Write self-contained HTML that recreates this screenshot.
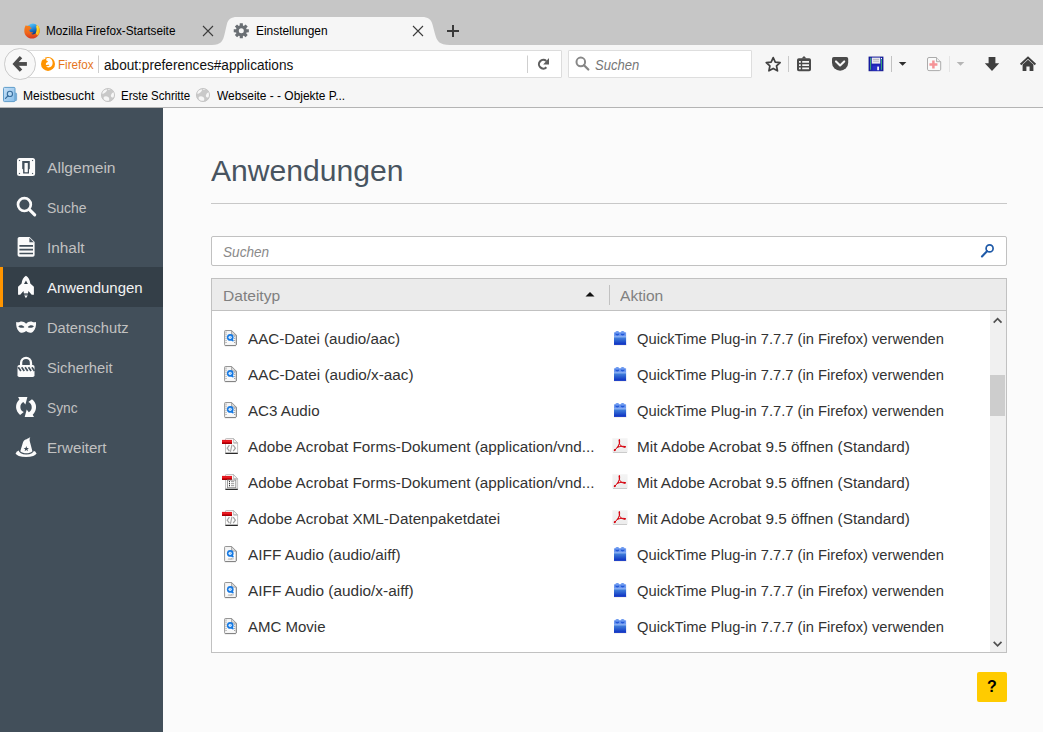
<!DOCTYPE html>
<html lang="de"><head><meta charset="utf-8"><title>Einstellungen</title>
<style>
html,body{margin:0;padding:0}
body{position:relative;width:1043px;height:732px;overflow:hidden;background:#fbfbfb;font-family:"Liberation Sans",sans-serif}
.t{position:absolute;white-space:pre;line-height:1;transform-origin:0 0;font-family:"Liberation Sans",sans-serif}
.abs{position:absolute}
#tabstrip{left:0;top:0;width:1043px;height:45px;background:#c6c6c6}
#navbar{left:0;top:45px;width:1043px;height:62px;background:#f6f6f6}
#chromeline{left:0;top:107px;width:1043px;height:1px;background:#b4b4b4}
#urlbar{left:19px;top:50px;width:541px;height:26px;background:#fff;border:1px solid #dcdcdc;border-radius:1px}
#searchbar{left:568px;top:50px;width:182px;height:26px;background:#fff;border:1px solid #dedede;border-radius:1px}
#back{left:4px;top:48px;width:29.6px;height:29.6px;border-radius:50%;background:#f8f8f8;border:1px solid #cbcbcb}
#sidebar{left:0;top:108px;width:163px;height:624px;background:#424f5a}
#sel{left:0;top:267px;width:163px;height:40px;background:#343f48}
#selbar{left:0;top:267px;width:3px;height:40px;background:#ff9500}
#hline{left:211px;top:203px;width:796px;height:1px;background:#c8c8c8}
#filter{left:211px;top:236px;width:794px;height:28px;background:#fff;border:1px solid #c1c1c1;border-radius:2px}
#tree{left:211px;top:278px;width:794px;height:373px;background:#fff;border:1px solid #c1c1c1}
#treehead{left:212px;top:279px;width:794px;height:31px;background:#ebebeb;border-bottom:1px solid #c1c1c1}
#colsep{left:609px;top:285px;width:1px;height:20px;background:#c1c1c1}
#sbar{left:990px;top:311px;width:16px;height:341px;background:#f0f0f0}
#thumb{left:990px;top:375px;width:15px;height:41px;background:#cdcdcd}
#help{left:977px;top:672px;width:30px;height:30px;background:#ffcb00;border-radius:2px}
svg{position:absolute;overflow:visible}

</style></head>
<body>
<div id="tabstrip" class="abs"></div>
<div id="navbar" class="abs"></div>
<div id="chromeline" class="abs"></div>
<!-- active tab shape -->
<svg style="left:0;top:0" width="1043" height="108" viewBox="0 0 1043 108">
  <path d="M212,45 C221,45 223,41 224.6,34 L226.8,24.5 C228.2,19 231,17 237,17 L422,17 C428,17 431,19 432.5,24.5 L435,34 C437,41 439,45 450,45 Z" fill="#f6f6f6"/>
  <!-- close X tab1 -->
  <path d="M203,26 L213,36 M213,26 L203,36" stroke="#3c3c3c" stroke-width="1.1" fill="none"/>
  <path d="M413,26 L423,36 M423,26 L413,36" stroke="#3c3c3c" stroke-width="1.1" fill="none"/>
  <!-- new tab plus -->
  <path d="M447,31 H459 M453,25 V37" stroke="#3a3a3a" stroke-width="2" fill="none"/>
</svg>
<div id="urlbar" class="abs"></div>
<div id="searchbar" class="abs"></div>
<div id="back" class="abs"></div>
<div id="sidebar" class="abs"></div>
<div id="sel" class="abs"></div>
<div id="selbar" class="abs"></div>
<div id="hline" class="abs"></div>
<div id="filter" class="abs"></div>
<div id="tree" class="abs"></div>
<div id="treehead" class="abs"></div>
<div id="colsep" class="abs"></div>
<div id="sbar" class="abs"></div>
<div id="thumb" class="abs"></div>
<div id="help" class="abs"></div>
<svg style="left:0;top:0" width="1043" height="732" viewBox="0 0 1043 732">
<defs>
<linearGradient id="lg" x1="0" y1="0" x2="0" y2="1"><stop offset="0" stop-color="#5a8cf0"/><stop offset="0.45" stop-color="#2f62d8"/><stop offset="1" stop-color="#1b3fae"/></linearGradient>
<linearGradient id="ffg" x1="0" y1="0" x2="0" y2="1"><stop offset="0" stop-color="#ffb400"/><stop offset="0.55" stop-color="#f06a0c"/><stop offset="1" stop-color="#c8321a"/></linearGradient>
<linearGradient id="pdfg" x1="0" y1="0" x2="0" y2="1"><stop offset="0" stop-color="#f4f4f4"/><stop offset="1" stop-color="#ececec"/></linearGradient>
<g id="qtbase">
  <linearGradient id="qtd" x1="0" y1="0" x2="0" y2="1"><stop offset="0" stop-color="#f1f1f1"/><stop offset="0.6" stop-color="#ffffff"/><stop offset="1" stop-color="#f4f4f4"/></linearGradient>
  <path d="M1.4,0.5 H7.6 L12.2,5.1 V14.7 Q12.2,15.5 11.4,15.5 H1.4 Q0.6,15.5 0.6,14.7 V1.3 Q0.6,0.5 1.4,0.5 Z" fill="url(#qtd)" stroke="#8a8a8a" stroke-width="0.9"/>
  <path d="M0.9,15.7 H12 M12.5,5.4 V15" stroke="#6a6a6a" stroke-width="0.7" opacity="0.7"/>
  <path d="M7.6,0.5 V5.1 H12.2 Z" fill="#dcdcdc" stroke="#8a8a8a" stroke-width="0.7"/>
  <circle cx="6.25" cy="7.4" r="3.35" fill="#1679e2"/>
  <path d="M7.6,9.4 L8.9,10.6" stroke="#1679e2" stroke-width="1.6" stroke-linecap="round"/>
  <circle cx="6.15" cy="7.3" r="1.6" fill="#e2f1ff"/>
  <path d="M6.2,6.4 V7.4 H7" stroke="#3b92ea" stroke-width="0.5" fill="none"/>
</g>
<g id="qt"><use href="#qtbase"/><rect x="1.5" y="1.70" width="1.1" height="0.8" fill="#7c7c7c"/><rect x="1.5" y="3.75" width="1.1" height="0.8" fill="#7c7c7c"/><rect x="1.5" y="5.80" width="1.1" height="0.8" fill="#7c7c7c"/><rect x="1.5" y="7.85" width="1.1" height="0.8" fill="#7c7c7c"/><rect x="1.5" y="9.90" width="1.1" height="0.8" fill="#7c7c7c"/><rect x="1.5" y="11.95" width="1.1" height="0.8" fill="#7c7c7c"/><rect x="10.1" y="5.80" width="1.1" height="0.8" fill="#7c7c7c"/><rect x="10.1" y="7.85" width="1.1" height="0.8" fill="#7c7c7c"/><rect x="10.1" y="9.90" width="1.1" height="0.8" fill="#7c7c7c"/><rect x="10.1" y="11.95" width="1.1" height="0.8" fill="#7c7c7c"/></g>
<g id="qta"><use href="#qtbase"/><path d="M4.2,13.8 L5,12.4 L5.8,13.8 M6.4,12.4 V13.8 M7.2,13.8 V12.4 H8.2 M7.2,13.1 H8 M8.8,13.8 V12.4 H9.6" stroke="#9a9a9a" stroke-width="0.6" fill="none"/></g>
<g id="lego">
  <linearGradient id="lgb" x1="0" y1="0" x2="0" y2="1"><stop offset="0" stop-color="#4584de"/><stop offset="0.45" stop-color="#2a5ecf"/><stop offset="1" stop-color="#0a2cc2"/></linearGradient>
  <rect x="0.1" y="13.6" width="12.6" height="0.9" fill="#8a7a6a" opacity="0.25"/>
  <rect x="0.2" y="1.3" width="12.1" height="5.4" rx="0.6" fill="#6c98ef"/>
  <rect x="1.5" y="0" width="4" height="4.8" rx="1.6" fill="#6d9af0"/>
  <rect x="6.8" y="0" width="4" height="4.8" rx="1.6" fill="#6d9af0"/>
  <path d="M1.6,2.4 Q3.5,3.4 5.4,2.4 V3.6 Q3.5,5.4 1.6,3.6 Z" fill="#2358d8"/>
  <path d="M6.9,2.4 Q8.8,3.4 10.7,2.4 V3.6 Q8.8,5.4 6.9,3.6 Z" fill="#2358d8"/>
  <rect x="0.2" y="5.6" width="12.1" height="0.9" fill="#9dbcf7"/>
  <rect x="0.2" y="6.4" width="12.1" height="7.6" fill="url(#lgb)"/>
</g>
<g id="pdfa">
  <rect x="0.6" y="13.4" width="14" height="1.5" rx="0.6" fill="#9c9c9c" opacity="0.75"/>
  <rect x="0" y="0" width="15.2" height="14.2" fill="url(#pdfg)"/>
  <g fill="none" stroke="#d6000c" stroke-linecap="round">
  <path d="M6.9,1.7 C6.5,3.4 6.9,5.2 7.7,6.6 C8.8,8.3 10.6,9 12.4,8.7" stroke-width="1"/>
  <path d="M7.3,3.8 C6.9,6.4 5.2,9.4 2.6,11.8" stroke-width="1"/>
  <path d="M4.8,9.3 C7.2,8.1 10,7.8 12.6,8.3" stroke-width="0.9"/>
  </g>
  <path d="M6.3,1.6 C6.5,0.8 7.6,0.8 7.7,1.7 C7.8,2.5 7.5,3.3 7.2,3.9 C6.7,3.2 6.2,2.4 6.3,1.6 Z" fill="#d6000c"/>
  <ellipse cx="2.5" cy="11.8" rx="1.25" ry="0.95" transform="rotate(-40 2.5 11.8)" fill="#d6000c"/>
  <ellipse cx="12.3" cy="8.6" rx="1.3" ry="0.85" fill="#d6000c"/>
  <path d="M5.2,8.4 L6.8,7.4 L6.6,9 Z" fill="#d6000c"/>
</g>
<g id="pdfdoc">
  <linearGradient id="redg" x1="0" y1="0" x2="0" y2="1"><stop offset="0" stop-color="#d80d16"/><stop offset="0.3" stop-color="#f0262c"/><stop offset="0.65" stop-color="#cc0008"/><stop offset="1" stop-color="#8e0006"/></linearGradient>
  <path d="M4.2,0.5 H11.4 L15.6,4.7 V15 H3.5 V1.2 Q3.5,0.5 4.2,0.5 Z" fill="#fdfdfd" stroke="#bcbcbc" stroke-width="0.9"/>
  <path d="M11.4,0.5 V4.7 H15.6 Z" fill="#f4f4f4" stroke="#b4b4b4" stroke-width="0.8"/>
  <path d="M11.6,5.2 H15.4" stroke="#9a9a9a" stroke-width="0.8" opacity="0.7"/>
  <path d="M3.4,15.4 H15.8" stroke="#2a2a2a" stroke-width="1.2"/>
  <rect x="0" y="1.9" width="10" height="4.1" fill="url(#redg)"/>
</g>
<g id="xmlg"><path d="M7.4,7.2 L5.2,10.2 L7.4,13.2 M11.2,7.2 L13.4,10.2 L11.2,13.2" fill="none" stroke="#a2a2a2" stroke-width="1.2"/><path d="M10,6.6 L8.4,13.8" fill="none" stroke="#a8a8a8" stroke-width="1.2"/></g>
<g id="formg"><rect x="5.4" y="6.1" width="8.4" height="7.6" fill="#fff" stroke="#8c8c8c" stroke-width="0.9"/>
<circle cx="7.5" cy="7.7" r="0.6" fill="#111"/><circle cx="7.5" cy="9.7" r="0.6" fill="#111"/><circle cx="7.5" cy="11.7" r="0.6" fill="#111"/>
<path d="M9,7.7 H12.2 M9,9.7 H12.2 M9,11.7 H12.2" stroke="#8a8a8a" stroke-width="0.9"/></g>
<g id="globe">
  <circle cx="7" cy="7" r="6.6" fill="#c9c9c9" stroke="#c0c0c0" stroke-width="0.8"/>
  <path d="M1.9,3.6 C2.8,2.2 4.6,1.4 6,1.6 C6.4,2.4 5.6,3.4 4.6,4.2 C3.8,5 2.6,5.8 1.3,5.8 C1.3,5 1.5,4.2 1.9,3.6 Z" fill="#f6f6f6"/>
  <path d="M3,8.8 C4.2,7.8 6,8 7.2,9 C8.4,10 8.6,11.6 7.8,12.7 C6,13.2 4,12.6 2.9,11.2 C2.5,10.4 2.5,9.4 3,8.8 Z" fill="#f6f6f6"/>
  <path d="M10,7 C10.4,5.8 11.4,4.6 12.5,4.2 C13.1,5.6 13.2,7.8 12.5,9.3 C11.5,9.6 10.4,9.2 10,8.4 C9.8,8 9.8,7.4 10,7 Z" fill="#f6f6f6"/>
  <path d="M6.8,1.1 C7.8,1 8.8,1.2 9.6,1.7 C8.8,2.2 7.6,2.2 6.8,1.8 Z" fill="#e9e9e9"/>
</g>
</defs>
<g transform="translate(24,23)">
<defs>
<linearGradient id="glb" x1="0.3" y1="0" x2="0.7" y2="1"><stop offset="0" stop-color="#5ccbff"/><stop offset="0.45" stop-color="#1f86d8"/><stop offset="1" stop-color="#06206e"/></linearGradient>
<linearGradient id="fox" x1="0" y1="0" x2="0" y2="1"><stop offset="0" stop-color="#f7831c"/><stop offset="0.6" stop-color="#ee651a"/><stop offset="1" stop-color="#d8351e"/></linearGradient>
<linearGradient id="tail" x1="0" y1="0" x2="1" y2="1"><stop offset="0" stop-color="#fff36a"/><stop offset="0.5" stop-color="#ffd21e"/><stop offset="1" stop-color="#f58a1a"/></linearGradient>
</defs>
<circle cx="8.8" cy="6.4" r="6" fill="url(#glb)"/>
<path d="M1.8,2.2 C2.6,2.8 3.4,2.9 4.2,2.7 C4.9,3 5.7,3 6.3,2.8 C5.9,3.6 6,4.2 6.6,4.6 C7.2,4.4 7.8,4.7 7.4,5.4 C6.6,5.8 5.8,6.2 5.4,7 C5.3,8 5.8,8.8 6.8,9.2 C7.8,9.4 8.8,9.1 9.4,9.6 C8.8,10.4 8,10.8 7,10.8 C8.4,11.9 10.6,11.6 11.8,10 C12.9,8.4 13,6 12.4,4.2 C12.2,3.2 12.6,2.2 13.4,1.9 C14.6,3 15.6,5 15.7,7.2 C15.8,11.8 12.4,15.6 8,15.6 C3.6,15.6 0.3,12.2 0.3,8 C0.3,5.6 0.8,3.6 1.8,2.2 Z" fill="url(#fox)"/>
<path d="M13.4,1.9 C14.6,3 15.6,5 15.7,7.2 C15.8,9 15.2,10.8 14.2,12.2 C13.4,12.4 12.4,12 11.8,10 C12.9,8.4 13,6 12.4,4.2 C12.2,3.2 12.6,2.2 13.4,1.9 Z" fill="url(#tail)"/>
</g>
<path d="M246.55,29.17 L248.85,29.27 L248.85,32.33 L246.55,32.43 L246.16,33.37 L247.72,35.05 L245.55,37.22 L243.87,35.66 L242.93,36.05 L242.83,38.35 L239.77,38.35 L239.67,36.05 L238.73,35.66 L237.05,37.22 L234.88,35.05 L236.44,33.37 L236.05,32.43 L233.75,32.33 L233.75,29.27 L236.05,29.17 L236.44,28.23 L234.88,26.55 L237.05,24.38 L238.73,25.94 L239.67,25.55 L239.77,23.25 L242.83,23.25 L242.93,25.55 L243.87,25.94 L245.55,24.38 L247.72,26.55 L246.16,28.23 Z M243.80,30.80 A2.5,2.5 0 1 0 238.80,30.80 A2.5,2.5 0 1 0 243.80,30.80 Z" fill="#6a6f74" fill-rule="evenodd"/>
<path d="M21,57.2 L14.8,63.9 L21,70.6" fill="none" stroke="#4c4c4c" stroke-width="3.4" stroke-linecap="butt" stroke-linejoin="miter"/><path d="M15.5,63.95 H26.9" stroke="#4c4c4c" stroke-width="3.8"/>
<g transform="translate(41,56.9)">
<circle cx="7" cy="7" r="7" fill="#ff9400"/>
<path d="M5.6,1.4 C6.6,1 8,0.9 9,1.3 C10.6,2 11.5,3.6 11.6,5.6 C11.7,7.6 11,9.4 9.4,10.2 C8.2,10.8 6.8,10.7 5.8,10.2 C5.5,9.9 5.4,9.6 5.5,9.3 C6.6,9.4 7.8,9.1 8.5,8.4 C7.8,7.9 7,7.8 6.2,8.1 C5.4,8.3 4.8,7.8 4.8,7 C5,6 5.8,5.4 6.7,5 C7,4.6 6.9,4.3 6.5,4.2 C5.8,4.2 5.4,3.9 5.3,3.4 C5.1,2.6 5.2,1.9 5.6,1.4 Z" fill="#fff"/>
<path d="M0.9,3 C1.2,2.4 1.5,2 1.9,1.7 C1.9,2.3 2.2,2.7 2.8,2.9 C3.4,2.2 4,1.9 4.6,1.6 L4.2,0.7 C2.9,1.1 1.7,1.9 0.9,3 Z" fill="#fff"/>
</g>
<path d="M98.5,55.5 V73" stroke="#cfcfcf" stroke-width="1"/>
<path d="M527.5,55.5 V73" stroke="#cfcfcf" stroke-width="1"/>
<path d="M546.3,61.1 A4.35,4.35 0 1 0 546.4,67.3" fill="none" stroke="#5e5e5e" stroke-width="2.1"/>
<path d="M549,58.1 V64.4 H543.2 Z" fill="#5e5e5e"/>
<circle cx="580.8" cy="61.9" r="4.3" fill="none" stroke="#888888" stroke-width="2"/><path d="M584,65.2 L588.3,69.5" stroke="#858585" stroke-width="2.3" stroke-linecap="round"/>
<path d="M773.20,57.60 L775.26,62.07 L780.14,62.64 L776.53,65.98 L777.49,70.81 L773.20,68.40 L768.91,70.81 L769.87,65.98 L766.26,62.64 L771.14,62.07 Z" fill="none" stroke="#404040" stroke-width="1.7" stroke-linejoin="round"/>
<path d="M788.5,56 V72" stroke="#c9c9c9" stroke-width="1"/>
<g fill="#4a4a4a"><path d="M801.5,58.5 L804,56 L806.5,58.5 Z"/>
<path d="M798.8,58.2 H809.2 Q811,58.2 811,60 V69.4 Q811,71.2 809.2,71.2 H798.8 Q797,71.2 797,69.4 V60 Q797,58.2 798.8,58.2 Z M799,61 V62.8 H800.8 V61 Z M802.2,61 V62.8 H809 V61 Z M799,64.2 V66 H800.8 V64.2 Z M802.2,64.2 V66 H809 V64.2 Z M799,67.4 V69.2 H800.8 V67.4 Z M802.2,67.4 V69.2 H809 V67.4 Z" fill-rule="evenodd"/></g>
<path d="M833.8,57 H846.4 Q848.2,57 848.2,58.8 V62.6 A8.1,8.1 0 0 1 832,62.6 V58.8 Q832,57 833.8,57 Z" fill="#4a4a4a"/>
<path d="M836,61.4 L840.1,65.4 L844.2,61.4" fill="none" stroke="#f6f6f6" stroke-width="2.1" stroke-linecap="round" stroke-linejoin="round"/>
<g><rect x="869" y="57" width="14" height="13.8" fill="#1c22b4"/>
<rect x="869" y="57" width="14" height="13.8" fill="none" stroke="#0d1288" stroke-width="0.8"/>
<rect x="870" y="57.8" width="1.1" height="12" fill="#35a07a"/><rect x="880.9" y="57.8" width="1.1" height="12" fill="#35a07a"/>
<rect x="871.8" y="57.6" width="8.4" height="6" fill="#e9e9ef"/>
<path d="M873,59.4 H879 M873,61.2 H879" stroke="#a9a9b5" stroke-width="0.8"/>
<rect x="872.4" y="65.6" width="7.2" height="5" fill="#2a30c6"/>
<rect x="877.2" y="66.6" width="1.8" height="3.6" fill="#f4f4f8"/>
<rect x="881" y="58" width="1" height="1" fill="#fff"/></g>
<path d="M891.5,56 V72" stroke="#c2c2c2" stroke-width="1"/>
<path d="M898.8,62 H906.4 L902.6,65.8 Z" fill="#2e2e2e"/>
<g opacity="0.95"><path d="M929,57.5 H936.5 L940.7,61.7 V69.2 Q940.7,70.6 939.3,70.6 H929 Q927.5,70.6 927.5,69.2 V59 Q927.5,57.5 929,57.5 Z" fill="#fbfbfb" stroke="#a8a8a8" stroke-width="1"/>
<path d="M936.5,57.5 V61.7 H940.7" fill="#ececec" stroke="#a8a8a8" stroke-width="0.9"/>
<path d="M929.4,64.4 H937.4 M933.4,60.4 V68.4" stroke="#f58e92" stroke-width="2.5"/></g>
<path d="M949.5,56 V72" stroke="#e4e4e4" stroke-width="1"/>
<path d="M956.7,62 H964.3 L960.5,65.8 Z" fill="#b5b5b5"/>
<path d="M988.6,57 H995.4 V63.2 H999.2 L992,71 L984.8,63.2 H988.6 Z" fill="#3f3f3f"/>
<path d="M1020.6,64.6 L1028,57.6 L1035.4,64.6" fill="none" stroke="#3f3f3f" stroke-width="2" stroke-linejoin="miter"/>
<path d="M1022.6,64.6 L1028,59.8 L1033.4,64.6 V71 H1029.6 V66.6 H1026.4 V71 H1022.6 Z" fill="#3f3f3f"/>
<g><defs><linearGradient id="mv" x1="0" y1="0" x2="1" y2="1"><stop offset="0" stop-color="#c9e1f7"/><stop offset="1" stop-color="#86bde9"/></linearGradient></defs>
<rect x="15" y="93" width="1.6" height="7.6" rx="0.9" fill="#a9d0f0" stroke="#5b97c6" stroke-width="0.8"/>
<rect x="3.5" y="87.4" width="11.5" height="14.2" rx="1" fill="url(#mv)" stroke="#5f9dcb" stroke-width="1"/>
<circle cx="9.9" cy="93.9" r="2.6" fill="#b9dbf6" stroke="#376d9c" stroke-width="1.1"/>
<path d="M8,95.9 L5.5,98.4" stroke="#376d9c" stroke-width="1.3" stroke-linecap="round"/></g>
<use href="#globe" x="101" y="88"/>
<use href="#globe" x="196" y="88"/>
<g><rect x="17" y="158" width="18.1" height="18" rx="2.5" fill="#fbfbfb"/>
<path d="M22.2,161 H29.8 V168.8 L29,169.5 V173.5 H23.1 V169.5 L22.2,168.8 Z" fill="#424f5a"/>
<rect x="24.5" y="162.9" width="3.3" height="9.3" rx="0.5" fill="#fbfbfb"/>
<path d="M19.5,159.7 L20.3,160.5 L19.5,161.3 L18.7,160.5 Z M32.6,159.7 L33.4,160.5 L32.6,161.3 L31.8,160.5 Z M19.5,172.7 L20.3,173.5 L19.5,174.3 L18.7,173.5 Z M32.6,172.7 L33.4,173.5 L32.6,174.3 L31.8,173.5 Z" fill="#424f5a"/></g>
<circle cx="24.4" cy="204.6" r="6.4" fill="none" stroke="#fbfbfb" stroke-width="2.7"/><path d="M29.4,209.6 L34.7,214.9" stroke="#fbfbfb" stroke-width="3.1" stroke-linecap="round"/>
<g><path d="M19.4,237 H29.6 L34.6,242 V255 Q34.6,256.8 32.8,256.8 H19.4 Q17.6,256.8 17.6,255 V238.8 Q17.6,237 19.4,237 Z" fill="#fbfbfb"/>
<path d="M29.4,237.8 V242.2 H33.8 Z" fill="#4a5762"/>
<path d="M19.4,245.8 H33 M19.4,249.7 H33 M19.4,253.5 H33" stroke="#424f5a" stroke-width="1.7"/></g>
<g><path d="M25.95,275.8 C28.3,277.2 30,279.8 30.3,283.6 L33.9,286.8 V294.7 H31.7 L28.4,291.1 L28,293.5 H23.9 L23.5,291.1 L20.2,294.7 H18.05 V286.8 L21.6,283.6 C21.9,279.8 23.6,277.2 25.95,275.8 Z" fill="#fbfbfb"/>
<path d="M25.95,280.5 L27.9,283.9 H24 Z" fill="#343f48"/>
<rect x="24.2" y="293.5" width="3.5" height="2" fill="#68727a"/>
<path d="M24.3,295.4 H27.6 L25.95,298.3 Z" fill="#fbfbfb"/></g>
<g><path d="M16.2,321.9 C17.6,322.5 18.6,322.4 19.6,321.9 C21.6,321 24.2,321.6 26.1,323.7 C28,321.6 30.6,321 32.6,321.9 C33.6,322.4 34.6,322.5 36,321.9 C36.4,325.4 35.4,329 33.4,331.2 C31.6,333.3 28.6,333.2 26.1,331 C23.6,333.2 20.6,333.3 18.8,331.2 C16.8,329 15.8,325.4 16.2,321.9 Z" fill="#fbfbfb"/>
<path d="M18.3,326.2 C19.8,324.7 22.7,324.8 24.4,326.9 C23.3,328.1 19.8,328.4 18.3,326.2 Z M33.9,326.2 C32.4,324.7 29.5,324.8 27.8,326.9 C28.9,328.1 32.4,328.4 33.9,326.2 Z" fill="#424f5a"/></g>
<g><path d="M21.1,366 V362.9 a4.95,4.95 0 0 1 9.9,0 V366" fill="none" stroke="#fbfbfb" stroke-width="2.3"/>
<rect x="17.5" y="364.9" width="17" height="12.1" rx="1.8" fill="#fbfbfb"/>
<path d="M18.3,367.2 L20.9,371 M21.7,367.2 L24.3,371 M25.1,367.2 L27.7,371 M28.5,367.2 L31.1,371 M31.9,367.2 L34.5,371" stroke="#424f5a" stroke-width="1.7"/>
<path d="M17.5,367.4 L18.2,368.6 V367.4 Z" fill="#424f5a"/></g>
<g fill="#fbfbfb"><path id="syncL" d="M18.1,397.1 L27.4,397.1 L25.4,404.5 L23.3,401.9 A5.7,5.7 0 0 0 23.8,412.1 L20.1,414.9 A10,10 0 0 1 19.4,399.4 Z"/>
<use href="#syncL" transform="rotate(180 26.05 407.05)"/></g>
<g><ellipse cx="26.05" cy="453.2" rx="10.2" ry="3.8" fill="#fbfbfb"/>
<ellipse cx="26.3" cy="450.1" rx="7.7" ry="4.3" fill="#424f5a"/>
<path d="M30.3,437 C28.4,438.4 27,439 25.5,439.6 C24.4,440.2 23.6,440.9 23.1,441.9 L20.3,451.2 C23.4,454 29.4,454 32.4,451.2 L29.6,440.4 C29.5,439.2 29.8,438 30.3,437 Z" fill="#fbfbfb"/>
<path d="M26.30,446.10 L27.01,447.93 L28.96,448.03 L27.44,449.27 L27.95,451.17 L26.30,450.10 L24.65,451.17 L25.16,449.27 L23.64,448.03 L25.59,447.93 Z" fill="#424f5a"/></g>
<circle cx="989.6" cy="248.4" r="3.5" fill="none" stroke="#1f5aa8" stroke-width="1.7"/><path d="M987,251.2 L982,256.4" stroke="#1f5aa8" stroke-width="2.1" stroke-linecap="round"/>
<path d="M585.5,296.4 H594.5 L590,291.9 Z" fill="#111"/>
<path d="M993.7,322.6 L997.6,318.6 L1001.5,322.6" fill="none" stroke="#505050" stroke-width="1.7"/>
<path d="M993.7,641.9 L997.6,645.9 L1001.5,641.9" fill="none" stroke="#505050" stroke-width="1.7"/>
<use href="#qt" x="224" y="330"/>
<use href="#lego" x="613.8" y="330.9"/>
<use href="#qt" x="224" y="366"/>
<use href="#lego" x="613.8" y="366.9"/>
<use href="#qt" x="224" y="402"/>
<use href="#lego" x="613.8" y="402.9"/>
<use href="#pdfdoc" x="222" y="438"/>
<use href="#xmlg" x="222" y="438"/>
<use href="#pdfa" x="612.4" y="438.2"/>
<use href="#pdfdoc" x="222" y="474"/>
<use href="#formg" x="222" y="474"/>
<use href="#pdfa" x="612.4" y="474.2"/>
<use href="#pdfdoc" x="222" y="510"/>
<use href="#xmlg" x="222" y="510"/>
<use href="#pdfa" x="612.4" y="510.2"/>
<use href="#qta" x="224" y="546"/>
<use href="#lego" x="613.8" y="546.9"/>
<use href="#qta" x="224" y="582"/>
<use href="#lego" x="613.8" y="582.9"/>
<use href="#qt" x="224" y="618"/>
<use href="#lego" x="613.8" y="618.9"/>
</svg>

<span class="t" style="left:46.28px;top:24.84px;font-size:12.0px;color:#000;transform:scaleX(0.9803)">Mozilla Firefox-Startseite</span>
<span class="t" style="left:255.88px;top:24.84px;font-size:12.0px;color:#000;transform:scaleX(0.9927)">Einstellungen</span>
<span class="t" style="left:58.08px;top:58.54px;font-size:12.0px;color:#e5751c;transform:scaleX(0.9714)">Firefox</span>
<span class="t" style="left:103.56px;top:58.14px;font-size:14.01px;color:#111;transform:scaleX(0.9728)">about:preferences#applications</span>
<span class="t" style="left:594.66px;top:58.14px;font-size:14.01px;color:#777777;font-style:italic;transform:scaleX(0.9304)">Suchen</span>
<span class="t" style="left:22.78px;top:89.84px;font-size:12.0px;color:#000;transform:scaleX(1.0076)">Meistbesucht</span>
<span class="t" style="left:120.58px;top:89.84px;font-size:12.0px;color:#000;transform:scaleX(0.9599)">Erste Schritte</span>
<span class="t" style="left:216.58px;top:89.84px;font-size:12.0px;color:#000;transform:scaleX(0.9937)">Webseite - - Objekte P...</span>
<span class="t" style="left:47.32px;top:160.86px;font-size:14.7px;color:#c1c1c1;transform:scaleX(1.0630)">Allgemein</span>
<span class="t" style="left:47.32px;top:200.86px;font-size:14.7px;color:#c1c1c1;transform:scaleX(0.9498)">Suche</span>
<span class="t" style="left:47.32px;top:240.86px;font-size:14.7px;color:#c1c1c1;transform:scaleX(1.0453)">Inhalt</span>
<span class="t" style="left:47.32px;top:280.86px;font-size:14.7px;color:#f2f2f2;transform:scaleX(1.0175)">Anwendungen</span>
<span class="t" style="left:47.32px;top:320.86px;font-size:14.7px;color:#c1c1c1;transform:scaleX(0.9989)">Datenschutz</span>
<span class="t" style="left:47.32px;top:360.86px;font-size:14.7px;color:#c1c1c1;transform:scaleX(1.0039)">Sicherheit</span>
<span class="t" style="left:47.32px;top:400.86px;font-size:14.7px;color:#c1c1c1;transform:scaleX(0.9359)">Sync</span>
<span class="t" style="left:47.32px;top:440.86px;font-size:14.7px;color:#c1c1c1;transform:scaleX(1.0278)">Erweitert</span>
<span class="t" style="left:211.44px;top:155.61px;font-size:29.4px;color:#485460;transform:scaleX(1.0243)">Anwendungen</span>
<span class="t" style="left:222.72px;top:245.16px;font-size:14.7px;color:#8a8a8a;font-style:italic;transform:scaleX(0.9265)">Suchen</span>
<span class="t" style="left:222.52px;top:289.06px;font-size:14.7px;color:#808080;transform:scaleX(1.0607)">Dateityp</span>
<span class="t" style="left:620.12px;top:289.06px;font-size:14.7px;color:#808080;transform:scaleX(1.0597)">Aktion</span>
<span class="t" style="left:248.32px;top:332.26px;font-size:14.7px;color:#333333;transform:scaleX(1.0348)">AAC-Datei (audio/aac)</span>
<span class="t" style="left:636.92px;top:332.26px;font-size:14.7px;color:#333333;transform:scaleX(1.0019)">QuickTime Plug-in 7.7.7 (in Firefox) verwenden</span>
<span class="t" style="left:248.32px;top:368.26px;font-size:14.7px;color:#333333;transform:scaleX(1.0401)">AAC-Datei (audio/x-aac)</span>
<span class="t" style="left:636.92px;top:368.26px;font-size:14.7px;color:#333333;transform:scaleX(1.0019)">QuickTime Plug-in 7.7.7 (in Firefox) verwenden</span>
<span class="t" style="left:248.32px;top:404.26px;font-size:14.7px;color:#333333;transform:scaleX(1.0309)">AC3 Audio</span>
<span class="t" style="left:636.92px;top:404.26px;font-size:14.7px;color:#333333;transform:scaleX(1.0019)">QuickTime Plug-in 7.7.7 (in Firefox) verwenden</span>
<span class="t" style="left:248.32px;top:440.26px;font-size:14.7px;color:#333333;transform:scaleX(1.0404)">Adobe Acrobat Forms-Dokument (application/vnd...</span>
<span class="t" style="left:636.92px;top:440.26px;font-size:14.7px;color:#333333;transform:scaleX(1.0425)">Mit Adobe Acrobat 9.5 öffnen (Standard)</span>
<span class="t" style="left:248.32px;top:476.26px;font-size:14.7px;color:#333333;transform:scaleX(1.0404)">Adobe Acrobat Forms-Dokument (application/vnd...</span>
<span class="t" style="left:636.92px;top:476.26px;font-size:14.7px;color:#333333;transform:scaleX(1.0425)">Mit Adobe Acrobat 9.5 öffnen (Standard)</span>
<span class="t" style="left:248.32px;top:512.26px;font-size:14.7px;color:#333333;transform:scaleX(1.0394)">Adobe Acrobat XML-Datenpaketdatei</span>
<span class="t" style="left:636.92px;top:512.26px;font-size:14.7px;color:#333333;transform:scaleX(1.0425)">Mit Adobe Acrobat 9.5 öffnen (Standard)</span>
<span class="t" style="left:248.32px;top:548.26px;font-size:14.7px;color:#333333;transform:scaleX(1.0459)">AIFF Audio (audio/aiff)</span>
<span class="t" style="left:636.92px;top:548.26px;font-size:14.7px;color:#333333;transform:scaleX(1.0019)">QuickTime Plug-in 7.7.7 (in Firefox) verwenden</span>
<span class="t" style="left:248.32px;top:584.26px;font-size:14.7px;color:#333333;transform:scaleX(1.0471)">AIFF Audio (audio/x-aiff)</span>
<span class="t" style="left:636.92px;top:584.26px;font-size:14.7px;color:#333333;transform:scaleX(1.0019)">QuickTime Plug-in 7.7.7 (in Firefox) verwenden</span>
<span class="t" style="left:248.32px;top:620.26px;font-size:14.7px;color:#333333;transform:scaleX(1.0218)">AMC Movie</span>
<span class="t" style="left:636.92px;top:620.26px;font-size:14.7px;color:#333333;transform:scaleX(1.0019)">QuickTime Plug-in 7.7.7 (in Firefox) verwenden</span>
<span class="t" style="left:987.20px;top:678.90px;font-size:16.66px;color:#000000;font-weight:700;transform:scaleX(0.9619)">?</span>
</body></html>
